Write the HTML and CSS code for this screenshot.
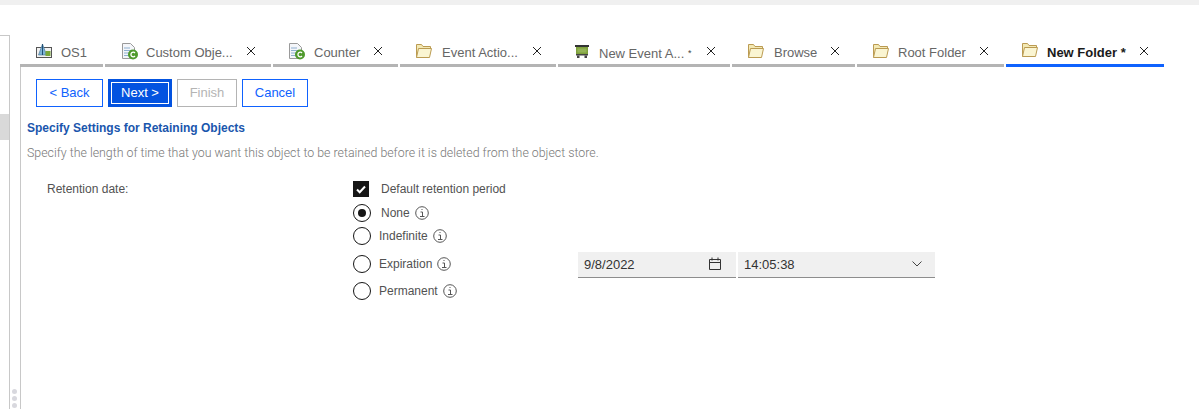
FILE: index.html
```html
<!DOCTYPE html>
<html lang="en">
<head>
  <meta charset="UTF-8" />
  <title>New Folder</title>
  <link rel="stylesheet" href="styles.css">
</head>
<body>
  <svg class="defs" width="0" height="0">
    <symbol id="folder" viewBox="0 0 16 14">
      <path d="M.5 13.500V.5h5l1.500 2h7.500v2" fill="#f3e9b4" stroke="#bb9b52"/>
      <path d="M.5 13.500l2-9h13l-2 9z" fill="#faf5d2" stroke="#bb9b52"/>
    </symbol>
    <symbol id="doc" viewBox="0 0 18 17">
      <path d="M1.500.5h8l4 4v11h-12z" fill="#f4f6fa" stroke="#9a9a9a"/>
      <path d="M3 5h6M3 7.500h8M3 10h5M3 12.500h5" stroke="#8fb0d0"/>
      <circle cx="12" cy="11.500" r="5" fill="#4f9a2c"/>
      <path d="M14 10a2.300 2.300 0 1 0 0 3" fill="none" stroke="#fff" stroke-width="1.300"/>
    </symbol>
    <symbol id="close" viewBox="0 0 10 10">
      <path d="M1 1l8 8M9 1l-8 8" stroke="#222" stroke-width="1"/>
    </symbol>
    <symbol id="info" viewBox="0 0 14 14">
      <circle cx="7" cy="7" r="6.300" fill="none" stroke="#555"/>
      <path d="M5.500 6h2v4.500M5 10.500h4.500M6.500 3.500h1" fill="none" stroke="#555"/>
    </symbol>
  </svg>

  <div class="topbar"></div>

  <div class="workspace">
    <div class="side">
      <div class="side-item"></div>
    </div>

    <div class="sash">
      <span></span><span></span><span></span>
    </div>

    <div class="main">
      <div class="tabs">
        <div class="tab tab-os">
          <svg class="tab-icon os-icon" viewBox="0 0 16 14">
            <rect x=".5" y="3.500" width="15" height="10" fill="#f2f2f2" stroke="#555"/>
            <path d="M6.500 0L2.500 11h8z" fill="#7fb4d6" stroke="#3d6f92" stroke-width=".6"/>
            <path d="M6.500 0v11" stroke="#1f4f75"/>
            <rect x="9.500" y="7" width="5" height="5" fill="#7aa83a"/>
          </svg>
          <span class="tab-label">OS1</span>
        </div>
        <div class="tab tab-custom">
          <svg class="tab-icon doc-icon"><use href="#doc"/></svg>
          <span class="tab-label">Custom Obje...</span>
          <svg class="tab-close"><use href="#close"/></svg>
        </div>
        <div class="tab tab-counter">
          <svg class="tab-icon doc-icon"><use href="#doc"/></svg>
          <span class="tab-label">Counter</span>
          <svg class="tab-close"><use href="#close"/></svg>
        </div>
        <div class="tab tab-action">
          <svg class="tab-icon folder-icon"><use href="#folder"/></svg>
          <span class="tab-label">Event Actio...</span>
          <svg class="tab-close"><use href="#close"/></svg>
        </div>
        <div class="tab tab-new-action">
          <svg class="tab-icon event-icon" viewBox="0 0 14 13">
            <rect x="0" y="0" width="14" height="2" fill="#333"/>
            <rect x="1" y="2" width="12" height="7" fill="#7ea03c"/>
            <rect x="2.500" y="3.500" width="9" height="4" fill="#93b356"/>
            <rect x="1" y="9" width="12" height="1.500" fill="#444"/>
            <rect x="2" y="10.500" width="2.500" height="2.500" fill="#444"/>
            <rect x="9.500" y="10.500" width="2.500" height="2.500" fill="#444"/>
          </svg>
          <span class="tab-label">New Event A... <small class="dirty">*</small></span>
          <svg class="tab-close"><use href="#close"/></svg>
        </div>
        <div class="tab tab-browse">
          <svg class="tab-icon folder-icon"><use href="#folder"/></svg>
          <span class="tab-label">Browse</span>
          <svg class="tab-close"><use href="#close"/></svg>
        </div>
        <div class="tab tab-root">
          <svg class="tab-icon folder-icon"><use href="#folder"/></svg>
          <span class="tab-label">Root Folder</span>
          <svg class="tab-close"><use href="#close"/></svg>
        </div>
        <div class="tab tab-new active">
          <svg class="tab-icon folder-icon"><use href="#folder"/></svg>
          <span class="tab-label">New Folder *</span>
          <svg class="tab-close"><use href="#close"/></svg>
        </div>
      </div>

      <div class="pane">
        <div class="toolbar">
          <button class="btn back">&lt; Back</button>
          <button class="btn primary">Next &gt;</button>
          <button class="btn disabled">Finish</button>
          <button class="btn cancel">Cancel</button>
        </div>

        <h2 class="title">Specify Settings for Retaining Objects</h2>
        <p class="desc">Specify the length of time that you want this object to be retained before it is deleted from the object store.</p>

        <div class="form">
          <div class="form-label">Retention date:</div>
          <div class="form-fields">
            <div class="row row-check">
              <span class="check">
                <svg viewBox="0 0 16 16"><path d="M4 8.500l2.700 2.700L12 5.500" fill="none" stroke="#fff" stroke-width="2"/></svg>
              </span>
              <span class="check-text">Default retention period</span>
            </div>
            <div class="row row-none">
              <span class="radio on"></span>
              <span class="opt-text none-text">None</span>
              <svg class="info"><use href="#info"/></svg>
            </div>
            <div class="row row-indef">
              <span class="radio"></span>
              <span class="opt-text">Indefinite</span>
              <svg class="info"><use href="#info"/></svg>
            </div>
            <div class="row row-exp">
              <span class="radio"></span>
              <span class="opt-text">Expiration</span>
              <svg class="info"><use href="#info"/></svg>
              <div class="inputs">
                <div class="input date">
                  <span>9/8/2022</span>
                  <svg class="input-icon" viewBox="0 0 14 14">
                    <path d="M1.500 2.500h11v10h-11zM1.500 5.500h11M4 .5v3M10 .5v3" fill="none" stroke="#333"/>
                  </svg>
                </div>
                <div class="input time">
                  <span>14:05:38</span>
                  <svg class="input-icon chevron" viewBox="0 0 10 6">
                    <path d="M.5 .5L5 5l4.500-4.500" fill="none" stroke="#444"/>
                  </svg>
                </div>
              </div>
            </div>
            <div class="row row-perm">
              <span class="radio"></span>
              <span class="opt-text">Permanent</span>
              <svg class="info"><use href="#info"/></svg>
            </div>
          </div>
        </div>
      </div>
    </div>
  </div>
</body>
</html>
```

FILE: styles.css
```css
* {
  box-sizing: border-box;
}

html, body {
  height: 100%;
}

body {
  margin: 0;
  background: #fff;
  color: #333;
  font-family: "Liberation Sans", Arial, sans-serif;
  font-size: 13px;
  overflow: hidden;
  display: flex;
  flex-direction: column;
}

.defs {
  position: absolute;
}

.topbar {
  height: 5px;
  flex: none;
  background: #f0f0f0;
}

.workspace {
  flex: 1;
  display: flex;
  min-height: 0;
}

/* left navigator, almost entirely cut off */
.side {
  width: 10px;
  margin-top: 30px;
  padding-top: 78px;
  border-top: 1px solid #c8c8c8;
  border-right: 1px solid #c8c8c8;
}

.side-item {
  height: 26px;
  background: #d9d9d9;
}

.sash {
  width: 10px;
  display: flex;
  flex-direction: column;
  justify-content: flex-end;
  align-items: center;
  gap: 2px;
  padding-right: 1px;
  margin-bottom: 1px;
}

.sash span {
  width: 5px;
  height: 5px;
  border-radius: 50%;
  background: #d8d8de;
}

.main {
  width: 1144px;
  display: flex;
  flex-direction: column;
}

.tabs {
  display: flex;
  gap: 2px;
  height: 62px;
  padding-top: 31px;
  flex: none;
}

.tab {
  height: 31px;
  display: flex;
  align-items: flex-start;
  border-bottom: 3px solid #b4b4b4;
  color: #666;
  font-size: 13px;
  padding-top: 6px;
}

.tab.active {
  border-bottom-color: #0f62fe;
  color: #1a1a1a;
  font-weight: bold;
}

.tab-label {
  white-space: nowrap;
  line-height: 18px;
  margin-top: 2px;
}

.dirty {
  font-size: 9px;
  color: #444;
  vertical-align: 2px;
}

.tab-icon {
  flex: none;
}

.folder-icon {
  width: 16px;
  height: 14px;
  margin-top: 2px;
}

.doc-icon {
  width: 18px;
  height: 17px;
  margin-top: 1px;
}

.os-icon {
  width: 16px;
  height: 14px;
  margin-top: 2px;
}

.event-icon {
  width: 14px;
  height: 13px;
  margin-top: 3px;
}

.tab-close {
  width: 10px;
  height: 10px;
  flex: none;
  margin-top: 4px;
}

.tab-os { width: 83px; padding-left: 16px; }
.tab-os .tab-label { margin-left: 9px; }

.tab-custom { width: 166px; padding-left: 16px; }
.tab-custom .tab-label { margin-left: 7px; width: 100px; }

.tab-counter { width: 125px; padding-left: 15px; }
.tab-counter .tab-label { margin-left: 8px; width: 59px; }

.tab-action { width: 156px; padding-left: 16px; }
.tab-action .tab-label { margin-left: 10px; width: 90px; }

.tab-new-action { width: 172px; padding-left: 17px; }
.tab-new-action .tab-label { margin-left: 10px; width: 107px; }

.tab-browse { width: 123px; padding-left: 16px; }
.tab-browse .tab-label { margin-left: 10px; width: 56px; }

.tab-root { width: 147px; padding-left: 16px; }
.tab-root .tab-label { margin-left: 9px; width: 81px; }

.tab-new { width: 158px; padding-left: 16px; }
.tab-new .tab-label { margin-left: 9px; width: 92px; }
.tab-new .folder-icon { margin-top: 1px; }

.pane {
  flex: 1;
  border-left: 1px solid #c8c8c8;
  padding-top: 12px;
}

.toolbar {
  display: flex;
  gap: 5px;
  margin-left: 15px;
}

.btn {
  height: 28px;
  padding: 0 0 2px;
  border: 1px solid #0f62fe;
  background: #fff;
  color: #0f62fe;
  font: 13px "Liberation Sans", Arial, sans-serif;
}

.back { width: 67px; }
.cancel { width: 66px; }

.primary {
  width: 64px;
  background: #0353e0;
  color: #fff;
  border: 3px solid #0353e0;
  outline: 1px solid #fff;
  outline-offset: -4px;
}

.disabled {
  width: 60px;
  border-color: #b4b4b4;
  color: #b4b4b4;
}

.title {
  margin: 13px 0 0 6px;
  font-size: 12px;
  line-height: 16px;
  font-weight: bold;
  color: #1a56ad;
}

.desc {
  margin: 9px 0 0 6px;
  font-family: Roboto, "Liberation Sans", sans-serif;
  font-size: 12.36px;
  line-height: 16px;
  font-weight: 300;
  color: #777;
  white-space: nowrap;
}

.form {
  display: flex;
  margin-top: 20px;
  font-size: 12px;
  color: #525252;
}

.form-label {
  width: 332px;
  padding-left: 26px;
  line-height: 16px;
}

.form-fields {
  flex: 1;
  display: flex;
  flex-direction: column;
}

.row {
  display: flex;
  align-items: center;
}

.row-check { height: 16px; }
.row-none { height: 18px; margin-top: 7px; }
.row-indef { height: 18px; margin-top: 5px; }
.row-exp { height: 18px; margin-top: 10px; }
.row-perm { height: 18px; margin-top: 9px; }

.check {
  width: 16px;
  height: 16px;
  background: #161616;
  display: flex;
}

.check svg {
  width: 16px;
  height: 16px;
}

.check-text {
  margin-left: 12px;
  line-height: 16px;
}

.radio {
  width: 18px;
  height: 18px;
  border: 1.5px solid #161616;
  border-radius: 50%;
  background: #fff;
  flex: none;
  display: flex;
  align-items: center;
  justify-content: center;
}

.radio.on::after {
  content: "";
  width: 8px;
  height: 8px;
  border-radius: 50%;
  background: #161616;
}

.opt-text {
  margin-left: 8px;
  line-height: 16px;
}

.none-text {
  margin-left: 10px;
}

.info {
  width: 14px;
  height: 14px;
  margin-left: 5px;
  flex: none;
}

.inputs {
  position: absolute;
  left: 578px;
  display: flex;
  gap: 2px;
  margin-top: 1px;
}

.input {
  height: 26px;
  background: #f0f0f0;
  border-bottom: 1px solid #8d8d8d;
  display: flex;
  align-items: center;
  justify-content: space-between;
  padding-left: 6px;
  font-size: 13px;
  color: #333;
}

.date {
  width: 158px;
  padding-right: 14px;
}

.time {
  width: 197px;
  padding-right: 13px;
}

.input-icon {
  width: 14px;
  height: 14px;
}

.chevron {
  width: 10px;
  height: 6px;
}
```
